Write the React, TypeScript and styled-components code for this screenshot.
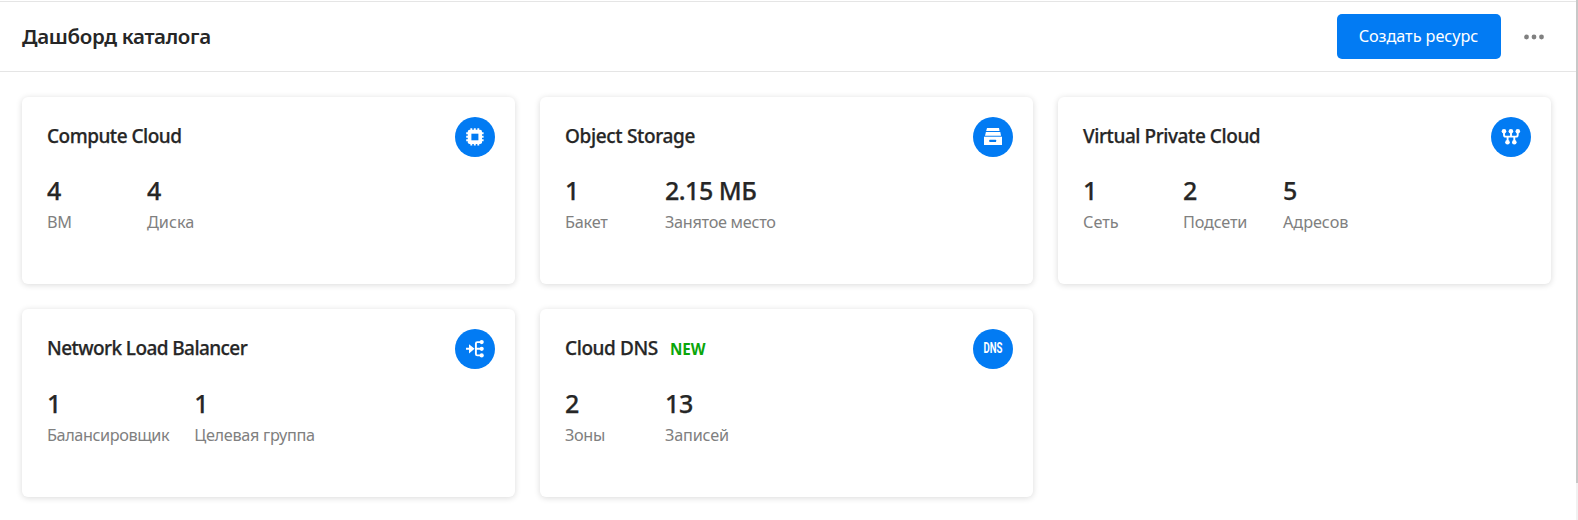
import React from "react";
import styled, { createGlobalStyle } from "styled-components";

const GlobalStyle = createGlobalStyle`
  * { box-sizing: border-box; }
  body {
    margin: 0;
    background: #fff;
    color: #262626;
    font-family: "Noto Sans", "Open Sans", sans-serif;
    overflow: hidden;
  }
`;

const Page = styled.div`
  display: flex;
  height: 520px;
`;

const Content = styled.main`
  flex: 1;
  padding-top: 1px;
`;

const Header = styled.header`
  display: flex;
  align-items: center;
  height: 71px;
  padding: 0 30px 0 22px;
  border-top: 1px solid #e5e5e5;
  border-bottom: 1px solid #e5e5e5;
`;

const PageTitle = styled.h1`
  flex: 1;
  margin: 0;
  padding-bottom: 2px;
  font-size: 20.5px;
  line-height: 28px;
  font-weight: 600;
  letter-spacing: -0.33px;
`;

const CreateButton = styled.button`
  width: 164px;
  height: 45px;
  padding: 0 0 2px;
  border: 0;
  border-radius: 5px;
  background: #027bf3;
  color: #fff;
  font: 400 16.25px/24px "Noto Sans", sans-serif;
  letter-spacing: -0.05px;
`;

const MoreButton = styled.button`
  display: flex;
  align-items: center;
  justify-content: center;
  width: 45px;
  height: 45px;
  margin-left: 10.5px;
  margin-right: -10px;
  padding: 0;
  border: 0;
  background: none;
`;

const Cards = styled.section`
  display: grid;
  grid-template-columns: repeat(3, 493px);
  grid-auto-rows: 187.4px;
  gap: 25px;
  padding: 25px 22px;
`;

const Card = styled.article`
  padding: 20px 20px 0 25px;
  border-radius: 6px;
  background: #fff;
  box-shadow: 0 1px 6px rgba(0, 0, 0, 0.15);
`;

const CardHeader = styled.div`
  display: flex;
  align-items: center;
  height: 40px;
`;

const CardTitle = styled.h2<{ $tracking: number }>`
  margin: 0;
  padding-bottom: 1px;
  font-size: 19px;
  line-height: 25px;
  font-weight: 500;
  -webkit-text-stroke: 0.25px currentColor;
  letter-spacing: ${(p) => p.$tracking}px;
`;

const NewBadge = styled.span`
  margin-left: 12px;
  padding-bottom: 1px;
  color: #0aa60a;
  font-size: 15.25px;
  line-height: 20px;
  font-weight: 700;
`;

const IconCircle = styled.div`
  width: 40px;
  height: 40px;
  margin-left: auto;
  border-radius: 50%;
  background: #027bf3;
`;

const Stats = styled.div`
  display: flex;
  gap: 25px;
  margin-top: 16.2px;
`;

const Stat = styled.div`
  min-width: 75px;
`;

const StatValue = styled.div<{ $tracking: number }>`
  font-size: 25px;
  line-height: 35px;
  font-weight: 500;
  -webkit-text-stroke: 0.25px currentColor;
  letter-spacing: ${(p) => p.$tracking}px;
`;

const StatLabel = styled.div<{ $tracking: number }>`
  margin-top: 1.95px;
  color: #808080;
  font-size: 16.25px;
  line-height: 25px;
  white-space: nowrap;
  letter-spacing: ${(p) => p.$tracking}px;
`;

const ScrollTrack = styled.div`
  width: 2px;
  background: #f1f1f1;
`;

const ScrollThumb = styled.div`
  height: 483px;
  background: #c8c8c8;
`;

const ComputeIcon = () => (
  <svg width="40" height="40" viewBox="0 0 40 40">
    <path
      d="M16.3 11.2v17.4M19.8 11.2v17.4M23.3 11.2v17.4M11.2 16.3h17.4M11.2 19.8h17.4M11.2 23.3h17.4"
      stroke="#fff"
      strokeWidth="1.9"
    />
    <rect x="12.8" y="12.8" width="14.2" height="14.2" rx="1.8" fill="#fff" />
    <rect x="16.4" y="16.7" width="7" height="6.6" fill="#027bf3" />
  </svg>
);

const StorageIcon = () => (
  <svg width="40" height="40" viewBox="0 0 40 40" fill="#fff">
    <path d="M14 11h12l.6 3H13.2z" />
    <path d="M12.9 15h14.4l.7 3.7H12z" />
    <path d="M11 19.7h18V28H11z" />
    <rect x="16.3" y="22.8" width="6.8" height="2.3" rx=".5" fill="#027bf3" />
  </svg>
);

const NetworkIcon = () => (
  <svg width="40" height="40" viewBox="0 0 40 40" fill="#fff">
    <path
      d="M13 14v4q0 1.6 1.6 1.6h10.5q1.6 0 1.6-1.6v-4M20 14v5.6M16.6 25v-5.4M23.3 25v-5.4"
      fill="none"
      stroke="#fff"
      strokeWidth="1.9"
    />
    <circle cx="13" cy="14.2" r="2.3" />
    <circle cx="19.9" cy="14.2" r="2.3" />
    <circle cx="26.8" cy="14.2" r="2.3" />
    <circle cx="16.5" cy="25.3" r="2.3" />
    <circle cx="23.3" cy="25.3" r="2.3" />
  </svg>
);

const BalancerIcon = () => (
  <svg width="40" height="40" viewBox="0 0 40 40" fill="#fff">
    <path
      d="M11 19.8h5M27 13.1h-4.6q-1.5 0-1.5 1.5v10.3q0 1.5 1.5 1.5H27M20.9 19.8H27"
      fill="none"
      stroke="#fff"
      strokeWidth="1.9"
    />
    <path d="M14 15.2l5.6 4.6-5.6 4.6z" />
    <circle cx="26.7" cy="13.1" r="2.1" />
    <circle cx="26.7" cy="19.8" r="2.1" />
    <circle cx="26.7" cy="26.4" r="2.1" />
  </svg>
);

const DnsIcon = () => (
  <svg width="40" height="40" viewBox="0 0 40 40">
    <text
      x="10.4"
      y="24.3"
      fill="#fff"
      fontFamily="Roboto, sans-serif"
      fontWeight="700"
      fontSize="13.8"
      textLength="19"
      lengthAdjust="spacingAndGlyphs"
    >
      DNS
    </text>
  </svg>
);

type StatItem = { value: string; label: string; tracking: number; valueTracking?: number };
type Service = {
  title: string;
  tracking: number;
  isNew?: boolean;
  Icon: () => React.JSX.Element;
  stats: StatItem[];
};

const services: Service[] = [
  {
    title: "Compute Cloud",
    tracking: -0.5,
    Icon: ComputeIcon,
    stats: [
      { value: "4", label: "ВМ", tracking: -0.3 },
      { value: "4", label: "Диска", tracking: 0 },
    ],
  },
  {
    title: "Object Storage",
    tracking: -0.34,
    Icon: StorageIcon,
    stats: [
      { value: "1", label: "Бакет", tracking: -0.2 },
      { value: "2.15 МБ", label: "Занятое место", tracking: -0.3, valueTracking: -0.5 },
    ],
  },
  {
    title: "Virtual Private Cloud",
    tracking: -0.43,
    Icon: NetworkIcon,
    stats: [
      { value: "1", label: "Сеть", tracking: 0 },
      { value: "2", label: "Подсети", tracking: -0.2 },
      { value: "5", label: "Адресов", tracking: -0.05 },
    ],
  },
  {
    title: "Network Load Balancer",
    tracking: -0.58,
    Icon: BalancerIcon,
    stats: [
      { value: "1", label: "Балансировщик", tracking: -0.42 },
      { value: "1", label: "Целевая группа", tracking: -0.3 },
    ],
  },
  {
    title: "Cloud DNS",
    tracking: -0.4,
    isNew: true,
    Icon: DnsIcon,
    stats: [
      { value: "2", label: "Зоны", tracking: -0.35 },
      { value: "13", label: "Записей", tracking: -0.2, valueTracking: -0.3 },
    ],
  },
];

export default function App() {
  return (
    <Page>
      <GlobalStyle />
      <Content>
        <Header>
          <PageTitle>Дашборд каталога</PageTitle>
          <CreateButton>Создать ресурс</CreateButton>
          <MoreButton aria-label="Ещё">
            <svg width="20" height="6" viewBox="0 0 20 6" fill="#808080">
              <circle cx="2.5" cy="3" r="2.4" />
              <circle cx="10" cy="3" r="2.4" />
              <circle cx="17.5" cy="3" r="2.4" />
            </svg>
          </MoreButton>
        </Header>
        <Cards>
          {services.map(({ title, tracking, isNew, Icon, stats }) => (
            <Card key={title}>
              <CardHeader>
                <CardTitle $tracking={tracking}>{title}</CardTitle>
                {isNew && <NewBadge>NEW</NewBadge>}
                <IconCircle>
                  <Icon />
                </IconCircle>
              </CardHeader>
              <Stats>
                {stats.map((s) => (
                  <Stat key={s.label}>
                    <StatValue $tracking={s.valueTracking ?? 0}>{s.value}</StatValue>
                    <StatLabel $tracking={s.tracking}>{s.label}</StatLabel>
                  </Stat>
                ))}
              </Stats>
            </Card>
          ))}
        </Cards>
      </Content>
      <ScrollTrack>
        <ScrollThumb />
      </ScrollTrack>
    </Page>
  );
}
